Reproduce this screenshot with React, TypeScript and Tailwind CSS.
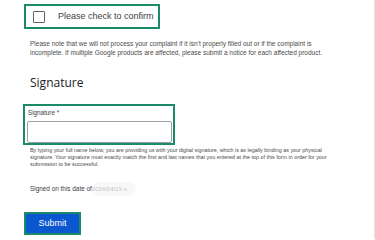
import React from "react";

export default function App() {
  return (
    <div className="w-[375px] h-[238px] bg-white border-r border-[#e3e3e3] overflow-hidden" style={{ fontFamily: '"Liberation Sans", Arial, sans-serif' }}>
      <div className="pl-[24px] pt-[4px]">
        <div className="w-[136px] h-[25px] border-2 border-[#1b8a6b] flex items-center pl-[7px]">
          <div className="w-[12px] h-[12px] border-[1.5px] border-[#5f6368] rounded-[1px] shrink-0" />
          <span className="ml-[13px] text-[9px] text-[#3c4043] leading-none whitespace-nowrap">Please check to confirm</span>
        </div>
        <div className="ml-[6px] mt-[11px] text-[6.5px] leading-[8.5px] text-[#4a4a4a] whitespace-nowrap">
          <p>Please note that we will not process your complaint if it isn't properly filled out or if the complaint is</p>
          <p>incomplete. If multiple Google products are affected, please submit a notice for each affected product.</p>
        </div>
        <h2 className="ml-[6px] mt-[19px] text-[12px] leading-[14px] text-[#202124]" style={{ fontFamily: '"Open Sans", Arial, sans-serif' }}>Signature</h2>
        <div className="-ml-[1px] mt-[14px] w-[152px] h-[41px] border-2 border-[#1b8a6b] pl-[2px] pr-[1px] pt-[3px] flex flex-col">
          <div className="text-[6.3px] leading-[8px] text-[#3c4043] pl-[1px]">Signature *</div>
          <div className="mt-[4px] flex-1 border border-[#9aa0a6] rounded-[2px] bg-white" />
        </div>
        <div className="ml-[6px] mt-[2px] text-[5.4px] leading-[7px] text-[#4a4a4a] whitespace-nowrap">
          <p>By typing your full name below, you are providing us with your digital signature, which is as legally binding as your physical</p>
          <p>signature. Your signature must exactly match the first and last names that you entered at the top of this form in order for your</p>
          <p>submission to be successful.</p>
        </div>
        <div className="ml-[6px] mt-[14px] flex items-center h-[14px]">
          <span className="text-[6.4px] text-[#3c4043]">Signed on this date of</span>
          <span className="h-[14px] w-[44px] rounded-full bg-[#f8f8f8] flex items-center">
            <span className="text-[6px] text-[#c4c4c4] blur-[0.4px]">2024/04/23 n</span>
          </span>
        </div>
        <button className="mt-[16px] w-[57px] h-[23px] border-2 border-[#1b8a6b] bg-[#0b57d0] text-white text-[9px] flex items-center justify-center">
          Submit
        </button>
      </div>
    </div>
  );
}
